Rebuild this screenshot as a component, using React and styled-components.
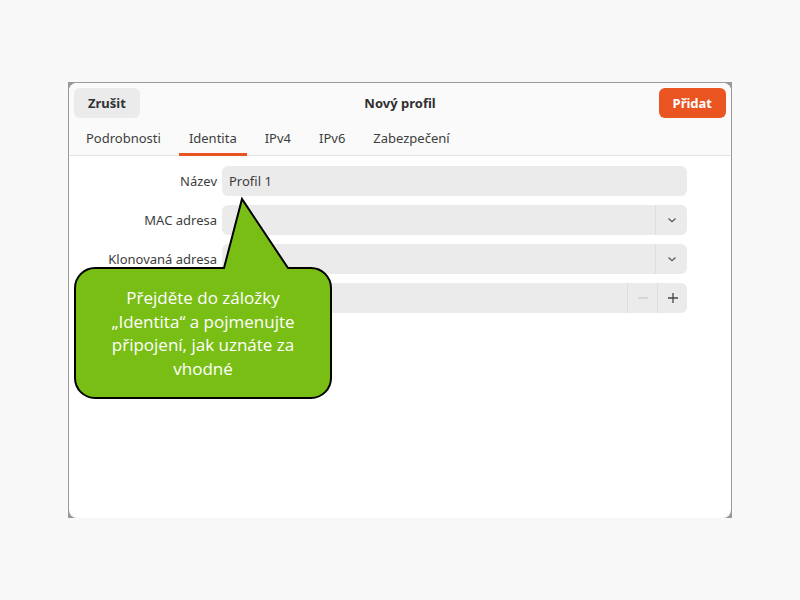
import React from 'react'
import styled, { createGlobalStyle } from 'styled-components'

const Global = createGlobalStyle`
    html, body {
        margin: 0;
        padding: 0;
        background: #f8f8f8;
    }
    body {
        font-family: "Noto Sans", "Open Sans", sans-serif;
        color: #3d3d3d;
    }
`

const Page = styled.div`
    width: 800px;
    height: 600px;
    padding: 82px 68px 0 68px;
    box-sizing: border-box;
`

const Frame = styled.div`
    width: 664px;
    height: 436px;
    box-sizing: border-box;
    background: #9a9a9a;
    padding: 1px 1px 0 1px;
`

const Window = styled.div`
    position: relative;
    height: 100%;
    background: #ffffff;
    border-radius: 8px;
    overflow: hidden;
    display: flex;
    flex-direction: column;
`

const Header = styled.div`
    display: grid;
    grid-template-columns: 1fr auto 1fr;
    align-items: center;
    padding: 5px 5px 6px 5px;
    background: #fafafa;
`

const Button = styled.button`
    justify-self: ${p => (p.$end ? 'end' : 'start')};
    height: 30px;
    padding: 0 14px;
    border: none;
    border-radius: 6px;
    font-family: inherit;
    font-size: 13px;
    font-weight: 700;
    background: ${p => (p.$primary ? '#e95420' : '#ebebeb')};
    color: ${p => (p.$primary ? '#ffffff' : '#333333')};
`

const Title = styled.div`
    font-size: 13px;
    font-weight: 700;
    color: #303030;
`

const Tabs = styled.div`
    display: flex;
    gap: 8px;
    padding: 0 0 0 7px;
    background: #fafafa;
    border-bottom: 1px solid #e2e2e2;
    height: 31px;
`

const Tab = styled.div`
    position: relative;
    padding: 0 10px;
    font-size: 13px;
    line-height: 28px;
    color: #3d3d3d;
    &::after {
        content: '';
        position: absolute;
        left: 0;
        right: 0;
        bottom: -1px;
        height: 3px;
        background: ${p => (p.$active ? '#e95420' : 'transparent')};
    }
`

const Form = styled.div`
    display: grid;
    grid-template-columns: 148px 465px;
    column-gap: 5px;
    row-gap: 9px;
    padding: 10px 0 0 0;
`

const Label = styled.div`
    font-size: 13px;
    text-align: right;
    align-self: center;
    color: #3d3d3d;
`

const Field = styled.div`
    display: flex;
    height: 30px;
    background: #ebebeb;
    border-radius: 6px;
    overflow: hidden;
`

const Value = styled.div`
    flex: 1;
    padding: 0 7px;
    font-size: 13px;
    line-height: 30px;
    color: #3d3d3d;
`

const Side = styled.div`
    width: ${p => p.$w || 31}px;
    display: flex;
    align-items: center;
    justify-content: center;
    border-left: 1px solid #dedede;
    color: ${p => (p.$dim ? '#cfcfcf' : '#444444')};
`

const Callout = styled.div`
    position: absolute;
    left: 5px;
    top: 113px;
    width: 260px;
    height: 205px;
`

const CalloutText = styled.div`
    position: absolute;
    left: 2px;
    top: 72px;
    width: 254px;
    height: 130px;
    display: flex;
    align-items: center;
    justify-content: center;
    text-align: center;
    font-family: "Open Sans", "Noto Sans", sans-serif;
    font-size: 17px;
    line-height: 23.5px;
    color: #ffffff;
`

const Chevron = () => (
    <svg width="12" height="12" viewBox="0 0 12 12">
        <path d="M2.5 4.5 L6 7.8 L9.5 4.5" fill="none" stroke="#555" strokeWidth="1.2" />
    </svg>
)

const Sign = ({ plus }) => (
    <svg width="12" height="12" viewBox="0 0 12 12">
        <path d={plus ? 'M1 6 H11 M6 1 V11' : 'M1 6 H11'} fill="none" stroke="currentColor" strokeWidth="1.3" />
    </svg>
)

const App = () => (
    <Page>
        <Global />
        <Frame>
            <Window>
                <Header>
                    <Button>Zrušit</Button>
                    <Title>Nový profil</Title>
                    <Button $primary $end>Přidat</Button>
                </Header>
                <Tabs>
                    <Tab>Podrobnosti</Tab>
                    <Tab $active>Identita</Tab>
                    <Tab>IPv4</Tab>
                    <Tab>IPv6</Tab>
                    <Tab>Zabezpečení</Tab>
                </Tabs>
                <Form>
                    <Label>Název</Label>
                    <Field><Value>Profil 1</Value></Field>
                    <Label>MAC adresa</Label>
                    <Field><Value /><Side><Chevron /></Side></Field>
                    <Label>Klonovaná adresa</Label>
                    <Field><Value /><Side><Chevron /></Side></Field>
                    <Label />
                    <Field><Value /><Side $w={29} $dim><Sign /></Side><Side $w={29}><Sign plus /></Side></Field>
                </Form>
                <Callout>
                    <svg width="260" height="205" viewBox="0 0 260 205">
                        <path
                            d="M21 72 L150 72 L168 3 L214 72 L237 72 A20 20 0 0 1 257 92 L257 182 A20 20 0 0 1 237 202 L21 202 A20 20 0 0 1 1 182 L1 92 A20 20 0 0 1 21 72 Z"
                            fill="#78be14"
                            stroke="#000"
                            strokeWidth="2"
                            strokeLinejoin="miter"
                        />
                    </svg>
                    <CalloutText>
                        Přejděte do záložky<br />„Identita“ a pojmenujte<br />připojení, jak uznáte za<br />vhodné
                    </CalloutText>
                </Callout>
            </Window>
        </Frame>
    </Page>
)

export default App
